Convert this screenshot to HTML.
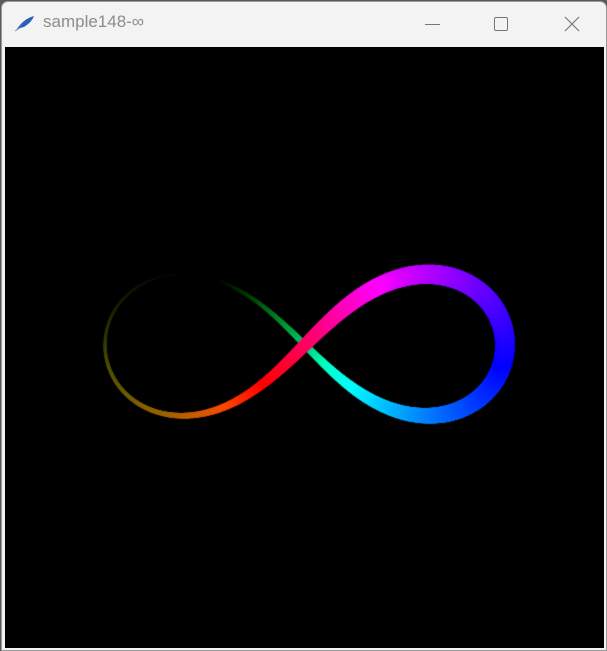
<!DOCTYPE html>
<html><head><meta charset="utf-8"><style>
html,body{margin:0;padding:0;width:607px;height:651px;overflow:hidden;background:#5a5a5a;}
#win{position:absolute;left:1px;top:1px;width:604px;height:648px;background:#f3f3f3;border:1px solid #9a9a9a;border-radius:7px 7px 0 0;}
#title{position:absolute;left:41px;top:10px;font:17px "Liberation Sans",sans-serif;color:#8c8c8c;}
#cv{position:absolute;left:3px;top:45px;}
.ctl{position:absolute;top:0;}
</style></head><body>
<div id="win">
<svg style="position:absolute;left:12px;top:11px" width="22" height="20" viewBox="0 0 22 20">
<path d="M2 17 L6 12 Q12 5 20 3 Q18 9 10 14 L6 15 Z" fill="#2a62b8"/>
<path d="M6 15 L1 18" stroke="#7a9bd0" stroke-width="1"/>
</svg>
<div id="title">sample148-∞</div>
<svg class="ctl" style="left:420px;top:14px" width="20" height="20"><line x1="3" y1="8.5" x2="18" y2="8.5" stroke="#777" stroke-width="1"/></svg>
<svg class="ctl" style="left:490px;top:13px" width="20" height="20"><rect x="2.5" y="2.5" width="13" height="13" rx="1.5" fill="none" stroke="#777" stroke-width="1"/></svg>
<svg class="ctl" style="left:561px;top:13px" width="20" height="20"><path d="M2 2 L16 16 M16 2 L2 16" stroke="#777" stroke-width="1.2"/></svg>
<canvas id="cv" width="599" height="601"></canvas>
</div>
<script>
var c=document.getElementById('cv'),g=c.getContext('2d');
g.fillStyle='#000';g.fillRect(0,0,599,601);
var cx=304-4,cy=344-46,a=200;
function P(t){var s=Math.sin(t),co=Math.cos(t),d=1+s*s;return [cx+a*co/d,cy+a*s*co/d];}
var T0=2.3,N=900,segs=[];
for(var i=0;i<N;i++){
 var s=i/N,t=T0+s*2*Math.PI,t2=T0+(i+1)/N*2*Math.PI;
 var sg=s<0.6?0.3:0.25;
 var w=1.5+18.5*Math.exp(-Math.pow((s-0.6)/sg,2));
 var h=((22-58*(t-3.9))%360+360)%360;
 var al=Math.max(0,Math.min(1,Math.pow(s/0.27,2),(1-s)/0.15));
 segs.push([P(t),P(t2),w,h,al]);
}
g.lineCap='round';
for(var i=segs.length-1;i>=0;i--){
 var q=segs[i];
 g.strokeStyle='hsla('+q[3]+',100%,'+(50*q[4])+'%,1)';
 g.lineWidth=q[2];
 g.beginPath();g.moveTo(q[0][0],q[0][1]);g.lineTo(q[1][0],q[1][1]);g.stroke();
}
</script>
</body></html>
